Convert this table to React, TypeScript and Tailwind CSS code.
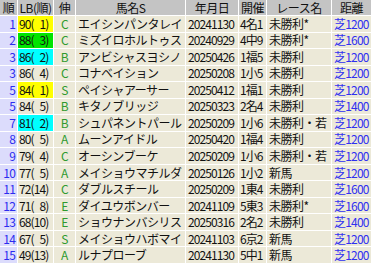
import React from "react"

type Row = {
  no: string
  lb: string
  rank: number
  grade: string
  name: string
  date: string
  place: string
  race: string
  dist: string
}

const rows: Row[] = [
  { no: "1", lb: "90( 1)", rank: 1, grade: "C", name: "エイシンパンタレイ", date: "20241130", place: "4名1", race: "未勝利*", dist: "芝1200" },
  { no: "2", lb: "88( 3)", rank: 3, grade: "C", name: "ミズイロホルトゥス", date: "20240929", place: "4中9", race: "未勝利*", dist: "芝1600" },
  { no: "3", lb: "86( 2)", rank: 2, grade: "B", name: "アンビシャスヨシノ", date: "20250426", place: "1福5", race: "未勝利", dist: "芝1200" },
  { no: "3", lb: "86( 4)", rank: 4, grade: "C", name: "コナベイション", date: "20250208", place: "1小5", race: "未勝利", dist: "芝1200" },
  { no: "5", lb: "84( 1)", rank: 1, grade: "S", name: "ペイシャアーサー", date: "20250412", place: "1福1", race: "未勝利", dist: "芝1200" },
  { no: "5", lb: "84( 5)", rank: 5, grade: "B", name: "キタノブリッジ", date: "20250323", place: "2名4", race: "未勝利", dist: "芝1400" },
  { no: "7", lb: "81( 2)", rank: 2, grade: "B", name: "シュパネントパール", date: "20250209", place: "1小6", race: "未勝利・若", dist: "芝1200" },
  { no: "8", lb: "80( 5)", rank: 5, grade: "A", name: "ムーンアイドル", date: "20250420", place: "1福4", race: "未勝利", dist: "芝1200" },
  { no: "9", lb: "79( 4)", rank: 4, grade: "C", name: "オーシンブーケ", date: "20250209", place: "1小6", race: "未勝利・若", dist: "芝1200" },
  { no: "10", lb: "77( 5)", rank: 5, grade: "A", name: "メイショウマチルダ", date: "20250126", place: "1小2", race: "新馬", dist: "芝1200" },
  { no: "11", lb: "72(14)", rank: 14, grade: "C", name: "ダブルスチール", date: "20250209", place: "1東4", race: "未勝利", dist: "芝1600" },
  { no: "12", lb: "71( 8)", rank: 8, grade: "E", name: "ダイユウボンバー", date: "20241109", place: "5東3", race: "未勝利*", dist: "芝1600" },
  { no: "13", lb: "68(10)", rank: 10, grade: "E", name: "ショウナンバシリス", date: "20250316", place: "2名2", race: "未勝利", dist: "芝1400" },
  { no: "14", lb: "67( 5)", rank: 5, grade: "S", name: "メイショウハボマイ", date: "20241103", place: "6京2", race: "新馬", dist: "芝1200" },
  { no: "15", lb: "49(13)", rank: 13, grade: "A", name: "ルナプローブ", date: "20241130", place: "5中1", race: "新馬", dist: "芝1200" },
]

const headers = ["順", "LB(順)", "伸", "馬名S", "年月日", "開催", "レース名", "距離"]

function lbColor(rank: number) {
  if (rank === 1) return "bg-[#ffff00]"
  if (rank === 2) return "bg-[#00ffff]"
  if (rank === 3) return "bg-[#00e400]"
  return "bg-[#ece9d8]"
}

export default function App() {
  return (
    <div className="w-[371px] h-[263px] bg-white overflow-hidden font-['Noto_Sans_CJK_JP',sans-serif] text-[12px] leading-[14px] text-[#111] tracking-[-0.5px]">
      <div className="grid h-[263px] grid-cols-[17px_35px_21px_109px_52px_27px_64px_39px] grid-rows-[15px_repeat(15,1fr)] gap-x-px gap-y-px">
        {headers.map(h => (
          <div key={h} className="bg-[#c4c4c4] flex items-center justify-center whitespace-nowrap">
            {h}
          </div>
        ))}
        {rows.map((r, i) => (
          <React.Fragment key={i}>
            <div className="bg-[#dcdcfc] text-[#2b2bf0] flex items-center justify-end pr-[2px] tracking-[-0.8px]">{r.no}</div>
            <div className={`${lbColor(r.rank)} flex items-center pl-[1px] whitespace-pre tracking-[-0.9px]`}>
              {r.lb.replace(" ", "\u2007")}
            </div>
            <div className="bg-[#ece9d8] text-[#2e9a2e] flex items-center justify-center">{r.grade}</div>
            <div className="bg-[#ece9d8] flex items-center pl-[2px] whitespace-nowrap overflow-hidden">{r.name}</div>
            <div className="bg-[#ece9d8] flex items-center pl-[2px] tracking-[-0.9px]">{r.date}</div>
            <div className="bg-[#ece9d8] flex items-center pl-[1px] whitespace-nowrap tracking-[-0.9px]">{r.place}</div>
            <div className="bg-[#ece9d8] flex items-center pl-[2px] whitespace-nowrap">{r.race}</div>
            <div className="bg-[#ece9d8] text-[#3030f0] flex items-center pl-[2px] whitespace-nowrap tracking-[-0.8px]">{r.dist}</div>
          </React.Fragment>
        ))}
      </div>
    </div>
  )
}
